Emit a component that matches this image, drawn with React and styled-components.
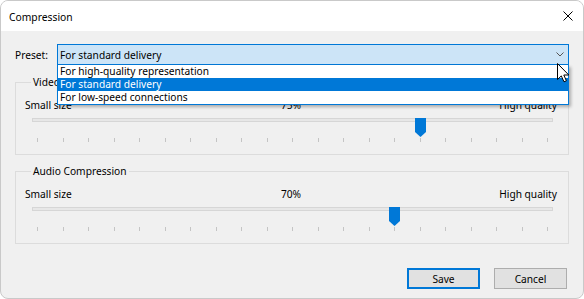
import React from "react";
import styled, { createGlobalStyle } from "styled-components";

const GlobalStyle = createGlobalStyle`
  html, body { margin: 0; padding: 0; background: #ffffff; }
  body { font-family: "Noto Sans", "Liberation Sans", sans-serif; font-size: 10.2px; color: #000; }
  * { box-sizing: border-box; }
`;

const Window = styled.div`
  position: relative;
  width: 584px;
  height: 299px;
  border: 1px solid #c9c9c9;
  border-radius: 8px;
  overflow: hidden;
  display: flex;
  flex-direction: column;
  background: #f0f0f0;
`;

const TitleBar = styled.div`
  height: 30px;
  flex: none;
  background: #ffffff;
  display: flex;
  align-items: center;
  justify-content: space-between;
  padding: 0 10px 0 8px;
`;

const Title = styled.span`
  font-size: 10.3px;
  line-height: 14px;
  margin-top: 1px;
`;

const CloseButton = styled.span`
  display: flex;
  width: 10px;
  height: 10px;
`;

const Body = styled.div`
  flex: 1;
  display: flex;
  flex-direction: column;
  padding: 13px 14px 9px 14px;
`;

const PresetRow = styled.div`
  display: flex;
  align-items: center;
  height: 21px;
`;

const Label = styled.span`
  width: 42px;
  flex: none;
  line-height: 14px;
`;

const ComboWrap = styled.div`
  position: relative;
  flex: 1;
  height: 21px;
`;

const Combo = styled.div`
  height: 21px;
  border: 1px solid #0078d7;
  background: #cce4f7;
  display: flex;
  align-items: center;
  justify-content: space-between;
  padding: 0 4px 0 2px;
  line-height: 14px;
`;

const DropList = styled.ul`
  position: absolute;
  left: 0;
  right: 0;
  top: 100%;
  margin: 0;
  padding: 0;
  list-style: none;
  background: #ffffff;
  border: 1px solid #0078d7;
  border-top: none;
  box-shadow: 2px 2px 3px rgba(0, 0, 0, 0.28);
  z-index: 5;
`;

const DropItem = styled.li`
  height: 13px;
  line-height: 13px;
  padding-left: 2px;
  background: ${(p) => (p.$selected ? "#0078d7" : "transparent")};
  color: ${(p) => (p.$selected ? "#ffffff" : "#000000")};
  white-space: nowrap;
`;

const Group = styled.fieldset`
  margin: 0;
  min-width: 0;
  border: 1px solid #dcdcdc;
  padding: 9px 11px 12px 9px;
  margin-top: ${(p) => p.$top}px;
`;

const Legend = styled.legend`
  padding: 0 2px;
  margin-left: 6px;
  line-height: 14px;
`;

const LabelsRow = styled.div`
  display: grid;
  grid-template-columns: 1fr auto 1fr;
  line-height: 14px;
  height: 14px;
`;

const Left = styled.span`
  justify-self: start;
`;
const Center = styled.span`
  justify-self: center;
`;
const Right = styled.span`
  justify-self: end;
`;

const SliderBox = styled.div`
  position: relative;
  margin: 6px 4px 0 7px;
  height: 19px;
`;

const Track = styled.div`
  margin-top: 6px;
  height: 4px;
  border: 1px solid #d6d6d6;
  background: #e7e7e7;
`;

const Thumb = styled.svg`
  position: absolute;
  top: 0;
  left: calc(${(p) => p.$value} * (100% - 11px));
  width: 11px;
  height: 19px;
`;

const Ticks = styled.div`
  display: flex;
  justify-content: space-between;
  padding: 0 5px;
  margin: 1px 4px 0 7px;
  height: 4px;
`;

const Tick = styled.span`
  width: 1px;
  height: 4px;
  background: #c4c4c4;
`;

const ButtonRow = styled.div`
  margin-top: auto;
  display: flex;
  justify-content: flex-end;
  gap: 14px;
  padding-right: 2px;
`;

const Button = styled.button`
  width: 73px;
  height: 21px;
  font: inherit;
  line-height: 14px;
  color: #000;
  background: #e1e1e1;
  border: ${(p) => (p.$default ? "2px solid #0078d7" : "1px solid #adadad")};
  padding: 0;
  margin: 0;
`;

const Cursor = styled.svg`
  position: absolute;
  left: 556px;
  top: 62px;
  width: 13px;
  height: 20px;
  z-index: 10;
  overflow: visible;
`;

function Slider({ value }) {
  return (
    <>
      <SliderBox>
        <Track />
        <Thumb $value={value} viewBox="0 0 11 19">
          <polygon points="0,0 11,0 11,14 5.5,19 0,14" fill="#0078d7" />
        </Thumb>
      </SliderBox>
      <Ticks>
        {Array.from({ length: 21 }).map((_, i) => (
          <Tick key={i} />
        ))}
      </Ticks>
    </>
  );
}

function CompressionGroup({ title, percent, top }) {
  return (
    <Group $top={top}>
      <Legend>{title}</Legend>
      <LabelsRow>
        <Left>Small size</Left>
        <Center>{percent}%</Center>
        <Right>High quality</Right>
      </LabelsRow>
      <Slider value={percent / 100} />
    </Group>
  );
}

export default function App() {
  const options = [
    "For high-quality representation",
    "For standard delivery",
    "For low-speed connections",
  ];
  return (
    <>
      <GlobalStyle />
      <Window>
        <TitleBar>
          <Title>Compression</Title>
          <CloseButton>
            <svg width="10" height="10" viewBox="0 0 10 10">
              <path d="M0.5 0.5 L9.5 9.5 M9.5 0.5 L0.5 9.5" stroke="#000" strokeWidth="1" />
            </svg>
          </CloseButton>
        </TitleBar>
        <Body>
          <PresetRow>
            <Label>Preset:</Label>
            <ComboWrap>
              <Combo>
                <span>For standard delivery</span>
                <svg width="8" height="5" viewBox="0 0 8 5">
                  <polyline points="0.5,0.5 4,4 7.5,0.5" fill="none" stroke="#555" strokeWidth="1" />
                </svg>
              </Combo>
              <DropList>
                {options.map((o) => (
                  <DropItem key={o} $selected={o === "For standard delivery"}>
                    {o}
                  </DropItem>
                ))}
              </DropList>
            </ComboWrap>
          </PresetRow>
          <CompressionGroup title="Video Compression" percent={75} top={10} />
          <CompressionGroup title="Audio Compression" percent={70} top={9} />
          <ButtonRow>
            <Button $default>Save</Button>
            <Button>Cancel</Button>
          </ButtonRow>
        </Body>
        <Cursor viewBox="0 0 13 20">
          <path
            d="M0.5 0.5 L0.5 16.5 L4.3 12.9 L7 18.8 L9.4 17.8 L6.8 12 L11.8 12 Z"
            fill="#fff"
            stroke="#000"
            strokeWidth="1"
            strokeLinejoin="miter"
          />
        </Cursor>
      </Window>
    </>
  );
}
